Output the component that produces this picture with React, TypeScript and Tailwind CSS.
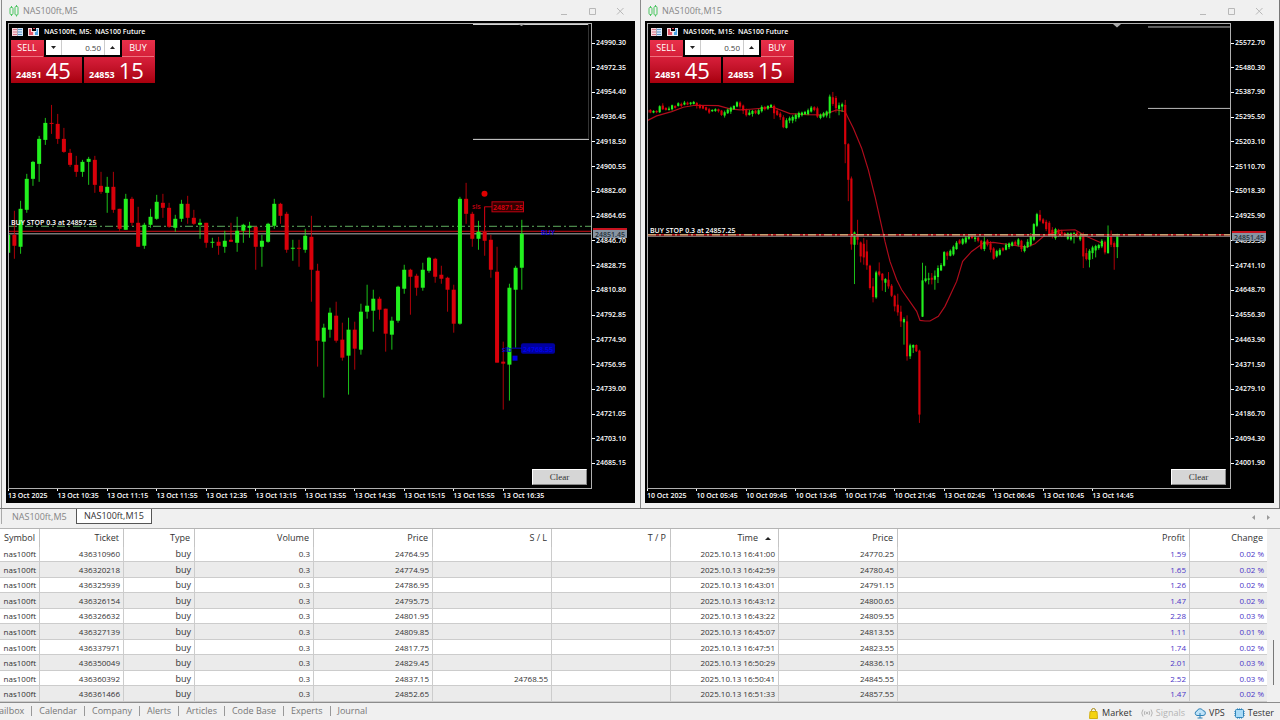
import type { ReactNode } from "react"
import { clsx } from "clsx"

// [high, body top, body bottom, low, rising]
type Candle = [number, number, number, number, 0 | 1]

interface ChartSpec {
  id: string
  title: string
  caption: string
  prices: string[]
  times: string[]
  originX: number
  orderY: number
  bidY: number
  drawing: ReactNode
  labels?: ReactNode
}

const PLOT_W = 582
const PLOT_H = 464
const UP = "#22f01e"
const DOWN = "#d8000a"

const M5: Candle[] = [
  [235, 235, 253, 255, 1], [211, 235, 246, 259, 0], [201, 209, 247, 254, 1], [174, 179, 210, 213, 1],
  [161, 162, 179, 186, 1], [136, 139, 164, 182, 1], [118, 123, 140, 145, 1], [105, 123, 124, 134, 0],
  [114, 124, 139, 144, 0], [128, 139, 152, 153, 0], [149, 153, 165, 167, 0], [156, 165, 172, 177, 0],
  [160, 162, 172, 177, 1], [157, 159, 162, 185, 1], [156, 160, 185, 193, 0], [172, 186, 192, 194, 0],
  [177, 187, 193, 213, 1], [172, 187, 210, 213, 0], [209, 209, 229, 231, 0], [194, 199, 230, 230, 1],
  [197, 199, 223, 226, 0], [207, 223, 247, 247, 0], [223, 225, 246, 249, 1], [209, 217, 225, 228, 1],
  [195, 202, 219, 220, 1], [194, 203, 208, 218, 0], [203, 208, 227, 228, 0], [215, 219, 228, 232, 1],
  [200, 204, 219, 222, 1], [196, 204, 218, 224, 0], [210, 218, 224, 225, 0], [219, 223, 225, 239, 1],
  [223, 223, 243, 248, 0], [238, 242, 243, 248, 1], [237, 242, 246, 255, 0], [231, 241, 247, 253, 1],
  [223, 240, 242, 242, 0], [217, 231, 243, 252, 1], [224, 225, 231, 243, 1], [222, 226, 228, 238, 1],
  [227, 227, 247, 270, 0], [235, 241, 247, 267, 1], [223, 224, 242, 243, 1], [199, 204, 226, 229, 1],
  [203, 204, 216, 224, 0], [212, 214, 250, 253, 0], [240, 248, 249, 261, 1], [240, 248, 249, 267, 0],
  [229, 236, 250, 253, 1], [216, 237, 270, 302, 0], [264, 271, 341, 367, 0], [324, 328, 342, 398, 1],
  [308, 313, 330, 338, 1], [302, 316, 341, 343, 0], [323, 340, 358, 361, 0], [318, 330, 356, 395, 1],
  [322, 330, 349, 370, 0], [304, 312, 350, 355, 1], [285, 306, 312, 319, 1], [290, 299, 311, 332, 1],
  [297, 299, 310, 320, 0], [309, 309, 334, 352, 0], [317, 321, 335, 350, 1], [286, 287, 321, 323, 1],
  [265, 270, 289, 294, 1], [269, 270, 277, 315, 0], [274, 276, 288, 296, 0], [263, 270, 288, 291, 1],
  [257, 258, 271, 273, 1], [258, 259, 277, 283, 0], [266, 275, 279, 284, 0], [277, 278, 290, 312, 0],
  [285, 290, 324, 333, 0], [197, 199, 324, 325, 1], [183, 199, 214, 224, 0], [212, 214, 239, 247, 0],
  [221, 232, 239, 250, 1], [207, 232, 241, 256, 0], [235, 240, 270, 278, 0], [247, 272, 363, 363, 0],
  [342, 362, 364, 410, 0], [284, 288, 365, 401, 1], [266, 268, 290, 348, 1], [220, 234, 268, 290, 1],
]

// finer series, stored in thirds of a plot unit
const M15: Candle[] = [
  [328, 330, 338, 340, 0], [328, 330, 338, 340, 0], [331, 333, 338, 340, 1], [331, 333, 337, 340, 0],
  [316, 319, 337, 339, 1], [310, 317, 328, 330, 0], [322, 324, 330, 332, 0], [320, 326, 330, 332, 1],
  [314, 316, 328, 332, 1], [316, 318, 324, 326, 0], [307, 310, 318, 320, 1], [308, 312, 318, 322, 0],
  [303, 308, 314, 316, 1], [305, 308, 314, 316, 0], [306, 308, 312, 316, 1], [303, 306, 312, 314, 1],
  [306, 309, 318, 326, 0], [312, 315, 324, 328, 0], [316, 318, 326, 328, 0], [320, 322, 330, 333, 0],
  [324, 328, 338, 342, 0], [328, 330, 334, 336, 1], [325, 328, 333, 336, 1], [326, 328, 334, 338, 0],
  [330, 332, 345, 348, 0], [332, 337, 347, 353, 1], [326, 329, 340, 342, 1], [320, 323, 335, 342, 1],
  [316, 318, 328, 330, 1], [304, 307, 320, 322, 1], [304, 308, 320, 326, 0], [314, 317, 332, 342, 0],
  [326, 330, 346, 350, 0], [330, 338, 345, 347, 1], [330, 333, 342, 350, 1], [330, 332, 340, 343, 0],
  [327, 331, 342, 345, 1], [316, 321, 334, 338, 1], [318, 321, 328, 332, 0], [316, 318, 326, 330, 1],
  [312, 315, 322, 324, 1], [314, 318, 340, 357, 0], [326, 332, 345, 348, 0], [336, 341, 352, 360, 0],
  [346, 352, 382, 385, 0], [355, 361, 384, 386, 1], [350, 355, 362, 370, 1], [346, 351, 362, 370, 1],
  [341, 345, 357, 365, 1], [335, 339, 352, 356, 1], [335, 338, 346, 350, 1], [333, 336, 343, 345, 1],
  [326, 331, 343, 346, 1], [318, 323, 335, 338, 1], [319, 322, 330, 334, 0], [320, 325, 350, 354, 0],
  [341, 345, 354, 358, 1], [336, 340, 350, 353, 1], [332, 335, 347, 353, 1], [284, 290, 340, 355, 1],
  [276, 292, 312, 318, 0], [288, 294, 325, 338, 0], [308, 316, 327, 346, 1], [308, 313, 320, 336, 1],
  [300, 315, 433, 490, 0], [430, 433, 540, 604, 0], [530, 536, 734, 750, 0], [695, 698, 735, 853, 1],
  [660, 705, 720, 735, 0], [725, 728, 770, 788, 0], [715, 732, 773, 795, 0], [720, 755, 797, 810, 0],
  [795, 798, 865, 870, 0], [835, 860, 892, 908, 0], [813, 818, 893, 897, 1], [788, 815, 825, 830, 0],
  [820, 822, 842, 873, 0], [835, 838, 849, 877, 1], [817, 840, 860, 867, 0], [853, 858, 888, 892, 0],
  [885, 888, 920, 935, 0], [882, 915, 938, 948, 0], [918, 936, 965, 982, 0], [953, 958, 968, 1035, 1],
  [947, 965, 1070, 1083, 0], [1032, 1037, 1070, 1078, 1], [1034, 1036, 1044, 1060, 1], [1034, 1036, 1055, 1057, 0],
  [1050, 1053, 1245, 1270, 0], [789, 842, 951, 952, 1], [798, 836, 844, 848, 1], [819, 836, 840, 854, 1],
  [820, 834, 840, 854, 0], [812, 828, 840, 870, 1], [797, 805, 832, 850, 1], [790, 796, 812, 814, 1],
  [754, 757, 798, 800, 1], [754, 758, 768, 780, 0], [749, 753, 768, 770, 1], [737, 741, 764, 768, 1],
  [724, 729, 748, 750, 1], [718, 722, 731, 734, 0], [714, 718, 732, 736, 1], [708, 713, 728, 732, 1],
  [706, 710, 717, 720, 1], [704, 708, 715, 718, 0], [708, 713, 718, 726, 1], [710, 713, 723, 728, 0],
  [720, 723, 747, 750, 0], [712, 725, 748, 754, 1], [718, 722, 735, 740, 0], [724, 731, 750, 758, 0],
  [742, 746, 777, 780, 0], [750, 754, 770, 774, 1], [745, 750, 765, 768, 1], [742, 745, 752, 755, 0],
  [730, 735, 750, 752, 1], [728, 731, 742, 748, 1], [725, 728, 738, 740, 1], [722, 726, 735, 738, 0],
  [715, 719, 735, 740, 1], [720, 723, 748, 756, 0], [735, 739, 754, 758, 1], [718, 726, 742, 745, 1],
  [700, 709, 735, 740, 1], [670, 673, 720, 724, 1], [639, 643, 678, 682, 1], [631, 645, 662, 666, 0],
  [655, 659, 670, 673, 0], [660, 666, 688, 694, 0], [664, 669, 706, 710, 0], [682, 690, 708, 716, 0],
  [684, 688, 715, 720, 1], [687, 690, 705, 712, 0], [690, 695, 708, 712, 0], [697, 700, 708, 712, 0],
  [698, 701, 717, 721, 1], [698, 701, 719, 723, 1], [696, 700, 710, 731, 1], [694, 698, 710, 714, 0],
  [700, 706, 719, 724, 1], [698, 703, 770, 805, 0], [745, 760, 778, 782, 0], [748, 753, 780, 803, 1],
  [738, 743, 760, 778, 1], [735, 739, 752, 773, 1], [732, 736, 745, 750, 1], [718, 723, 740, 745, 1],
  [722, 726, 758, 764, 0], [677, 706, 760, 762, 1], [692, 710, 735, 742, 0], [725, 730, 742, 810, 0],
  [702, 710, 742, 775, 1],
]

const AVERAGE =
  "1942,362 1970,348 2015,335 2050,322 2085,316 2155,317 2190,327 2220,330 2250,328 2320,322 2370,341 2420,344 2470,345 2510,330 2535,335 2560,385 2585,445 2605,510 2625,590 2655,725 2670,785 2690,840 2705,870 2750,935 2760,962 2775,964 2790,964 2815,950 2835,920 2870,845 2888,785 2915,755 2950,730 2980,728 3030,735 3080,742 3105,732 3130,710 3180,692 3225,690 3260,710 3310,732"

const ROWS = [
  ["436310960", "24764.95", "", "16:41:00", "24770.25", "1.59", "0.02 %"],
  ["436320218", "24774.95", "", "16:42:59", "24780.45", "1.65", "0.02 %"],
  ["436325939", "24786.95", "", "16:43:01", "24791.15", "1.26", "0.02 %"],
  ["436326154", "24795.75", "", "16:43:12", "24800.65", "1.47", "0.02 %"],
  ["436326632", "24801.95", "", "16:43:22", "24809.55", "2.28", "0.03 %"],
  ["436327139", "24809.85", "", "16:45:07", "24813.55", "1.11", "0.01 %"],
  ["436337971", "24817.75", "", "16:47:51", "24823.55", "1.74", "0.02 %"],
  ["436350049", "24829.45", "", "16:50:29", "24836.15", "2.01", "0.03 %"],
  ["436360392", "24837.15", "24768.55", "16:50:41", "24845.55", "2.52", "0.03 %"],
  ["436361466", "24852.65", "", "16:51:33", "24857.55", "1.47", "0.02 %"],
]

const COLUMNS = [
  { name: "Symbol", width: "w-[40px]" },
  { name: "Ticket", width: "w-[84px]" },
  { name: "Type", width: "w-[71px]" },
  { name: "Volume", width: "w-[119px]" },
  { name: "Price", width: "w-[119px]" },
  { name: "S / L", width: "w-[119px]" },
  { name: "T / P", width: "w-[119px]" },
  { name: "Time", width: "w-[108px]" },
  { name: "Price", width: "w-[119px]" },
  { name: "Profit", width: "" },
  { name: "Change", width: "w-[77px]" },
]

const PANELS = ["Mailbox", "Calendar", "Company", "Alerts", "Articles", "Code Base", "Experts", "Journal"]

function Candles({ data, x0, step, body, wick }: { data: Candle[]; x0: number; step: number; body: number; wick: number }) {
  return (
    <>
      {data.map(([high, top, bottom, low, rising], i) => {
        const x = x0 + i * step
        const color = rising ? UP : DOWN
        return (
          <g key={i} fill={color}>
            <rect x={x - wick / 2} y={high} width={wick} height={low - high} opacity={0.8} />
            <rect x={x - body / 2} y={top} width={body} height={Math.max(bottom - top, 1)} />
          </g>
        )
      })}
    </>
  )
}

// Text pinned to a plot coordinate; follows the plot when it is resized
function Pin({ x, y, className, children }: { x: number; y: number; className?: string; children?: ReactNode }) {
  return (
    <span
      className={clsx("absolute -translate-y-1/2 whitespace-nowrap text-[7px] leading-[9px]", className)}
      style={{ left: `${(x / PLOT_W) * 100}%`, top: `${(y / PLOT_H) * 100}%` }}
    >
      {children}
    </span>
  )
}

function CandleIcon() {
  return (
    <svg width="10" height="12" viewBox="0 0 10 12" fill="none" stroke="#4cc662" aria-hidden="true">
      <path d="M2.500 1v1.500M2.500 9.500v1.500M7.500 0v1.500M7.500 10v1.500" />
      <rect x="1" y="2.500" width="3" height="7" rx="1" />
      <rect x="6" y="1.500" width="3" height="8.500" rx="1" />
    </svg>
  )
}

function DepthIcon() {
  return (
    <svg width="11" height="8" viewBox="0 0 11 8" aria-hidden="true">
      <path d="M0 0h5.500v8H0z" fill="#f6d9de" />
      <path d="M5.500 0H11v8H5.500z" fill="#d5e8f8" />
      <path d="M1 1.500h4M1 4h4M1 6.500h4" stroke="#d9788a" />
      <path d="M6 1.500h4M6 4h4M6 6.500h4" stroke="#5a94cc" />
    </svg>
  )
}

function TradeIcon() {
  return (
    <svg width="11" height="8" viewBox="0 0 11 8" aria-hidden="true">
      <path d="M0 0h4v3h2v5H0z" fill="#f6dde2" />
      <path d="M1 1h2v3h2v3H1z" fill="#e2566a" />
      <path d="M6 3h2V0h3v8H6z" fill="#e6f0fa" />
      <path d="M8.500 1H10v6H7V4h1.500z" fill="#4ba3e4" />
      <path d="M5 0h2v1H5z" fill="#e0415a" />
    </svg>
  )
}

function QuoteButton({ side, small, big }: { side: "SELL" | "BUY"; small: string; big: string }) {
  return (
    <button
      type="button"
      className="flex w-[71px] flex-col bg-linear-to-b from-[#e8304a] via-[#d01a34] to-[#a8000c] text-white"
    >
      <span
        className={clsx(
          "w-8 border-b border-[#f0707e] text-center text-[9px] leading-4",
          side === "BUY" && "mr-px self-end",
        )}
      >
        {side}
      </span>
      <span className="flex h-[26px] items-end gap-1 pl-[5px]">
        <span className="pb-[3px] text-[9px] font-bold leading-[10px]">{small}</span>
        <span className="text-[22px] leading-[26px]">{big}</span>
      </span>
    </button>
  )
}

function TradePanel({ id }: { id: string }) {
  return (
    <div className="absolute left-[2px] top-4 flex h-[43px] gap-[2px] font-normal">
      <QuoteButton side="SELL" small="24851" big="45" />
      <QuoteButton side="BUY" small="24853" big="15" />
      <div className="absolute left-[33px] top-0 flex h-[17px] w-[78px] bg-black px-[2px] pb-[2px]">
        <button type="button" aria-label="Decrease volume" className="grid w-[15px] place-items-center bg-white">
          <svg width="5" height="3" viewBox="0 0 5 3"><path d="M0 0h5L2.500 3z" fill="#222" /></svg>
        </button>
        <input
          id={`volume-${id}`}
          aria-label="Volume"
          defaultValue="0.50"
          className="min-w-0 flex-1 border-x border-[#ccc] bg-white pr-[3px] text-right text-[8px] text-[#444] outline-none"
        />
        <button type="button" aria-label="Increase volume" className="grid w-[15px] place-items-center bg-white">
          <svg width="5" height="3" viewBox="0 0 5 3"><path d="M0 3h5L2.500 0z" fill="#222" /></svg>
        </button>
      </div>
    </div>
  )
}

function ChartWindow({ spec }: { spec: ChartSpec }) {
  return (
    <section className="flex min-w-0 flex-1 flex-col border-l border-[#8a8a8a] pb-[5px] pl-1 pr-[5px]">
      <header className="flex h-[21px] shrink-0 items-center pl-[3px] pr-[11px] text-[#868686]">
        <CandleIcon />
        <h2 className="ml-1 text-[9px] leading-3">{spec.title}</h2>
        <div className="ml-auto flex gap-5 text-[#b8b8b8]">
          {[
            ["Minimize", "M1 7.500h6"],
            ["Maximize", "M1.500 1.500h6v6h-6z"],
            ["Close", "M1 1l6.500 6.500M7.500 1L1 7.500"],
          ].map(([name, d]) => (
            <button key={name} type="button" aria-label={name} className="pt-px">
              <svg width="8" height="9" viewBox="0 0 8 9" fill="none" stroke="currentColor"><path d={d} /></svg>
            </button>
          ))}
        </div>
      </header>

      <div className="grid min-h-0 flex-1 grid-cols-[minmax(0,1fr)_43px] grid-rows-[minmax(0,1fr)_14px] bg-black pl-[2px] pt-[2px] font-semibold text-white">
        <div className="relative z-10 border border-[#b0b0b0]">
          <svg
            className="absolute inset-0 h-full w-full"
            viewBox={`${spec.originX} 24 ${PLOT_W} ${PLOT_H}`}
            preserveAspectRatio="none"
            aria-hidden="true"
          >
            {spec.drawing}
          </svg>
          <div className="absolute left-[3px] top-[3px] flex items-center gap-[5px] whitespace-pre text-[7px] leading-[9px]">
            <DepthIcon />
            <TradeIcon />
            {spec.caption}
          </div>
          <TradePanel id={spec.id} />
          <Pin x={2} y={spec.orderY}>BUY STOP 0.3 at 24857.25</Pin>
          {spec.labels}
          <button
            type="button"
            className="absolute bottom-[3px] right-1 h-4 w-[55px] border border-b-[#888] border-l-white border-r-[#888] border-t-white bg-[#d6d6d6] font-['Liberation_Serif',serif] text-[9px] font-normal leading-3 text-[#333]"
          >
            Clear
          </button>
        </div>

        <div className="row-span-2 flex flex-col justify-between pb-[35px] pt-4 text-[7px] leading-2">
          {spec.prices.map((price) => (
            <div key={price} className="flex h-2 items-center gap-px">
              <span className="h-px w-[3px] bg-white" />
              {price}
            </div>
          ))}
        </div>

        <div className="flex">
          {spec.times.map((time) => (
            <div key={time} className="min-w-0 flex-5 whitespace-nowrap text-[7px] leading-[10px]">
              <div className="h-[2px] w-px bg-white" />
              {time}
            </div>
          ))}
          <div style={{ flexGrow: 59 - spec.times.length * 5 }} />
        </div>
      </div>
    </section>
  )
}

function PriceTag({ y }: { y: number }) {
  return (
    <Pin x={584} y={y} className="h-[10px] w-[34px] border-t-2 border-[#c81420] bg-[#8794a2] pl-[2px] text-[#25303a]">
      24851.45
    </Pin>
  )
}

const CHARTS: ChartSpec[] = [
  {
    id: "m5",
    title: "NAS100ft,M5",
    caption: "NAS100ft, M5:  NAS100 Future",
    originX: 9,
    orderY: 198,
    bidY: 209,
    prices: [
      "24990.30", "24972.35", "24954.40", "24936.45", "24918.50", "24900.55", "24882.60", "24864.65", "24846.70",
      "24828.75", "24810.80", "24792.85", "24774.90", "24756.95", "24739.00", "24721.05", "24703.10", "24685.15",
    ],
    times: [
      "13 Oct 2025", "13 Oct 10:35", "13 Oct 11:15", "13 Oct 11:55", "13 Oct 12:35", "13 Oct 13:15",
      "13 Oct 13:55", "13 Oct 14:35", "13 Oct 15:15", "13 Oct 15:55", "13 Oct 16:35",
    ],
    drawing: (
      <>
        <path d="M473 24.500H589M473 139.500H589" stroke="#d8d8d8" />
        <path d="M588.500 24V139" stroke="#333" />
        <path d="M518 24h7l-3.500 2z" fill="#aaa" />
        <path d="M9 226.500H591" stroke="#5fae5f" strokeDasharray="8 3 2 3" />
        <path d="M9 231.500H591" stroke="#d01018" />
        <path d="M9 234H591" stroke="#777" strokeWidth="1.500" />
        <Candles data={M5} x0={8.200} step={6.188} body={4} wick={1} />
        <circle cx="484.500" cy="194" r="3" fill="#e00000" />
        <path d="M484.500 232V207H492" stroke="#c00010" fill="none" />
        <rect x="492" y="202" width="31.500" height="10" fill="#300" stroke="#c00010" />
        <rect x="521" y="343.500" width="34" height="10.500" rx="2" fill="#0000a0" />
        <path d="M512 348.500h10" stroke="#0000d0" />
        <rect x="512.500" y="356" width="5" height="5" fill="#0000e0" />
      </>
    ),
    labels: (
      <>
        <Pin x={463} y={182} className="text-[#c00010]">sls</Pin>
        <Pin x={484} y={183} className="text-[#e00010]">24871.25</Pin>
        <Pin x={532} y={208} className="text-[#0000e0]">BUY</Pin>
        <Pin x={493} y={325} className="text-[#0000e0]">slb</Pin>
        <Pin x={514} y={325} className="text-[#0000f0]">24768.55</Pin>
      </>
    ),
  },
  {
    id: "m15",
    title: "NAS100ft,M15",
    caption: "NAS100ft, M15:  NAS100 Future",
    originX: 648,
    orderY: 206,
    bidY: 212,
    prices: [
      "25572.70", "25480.30", "25387.90", "25295.50", "25203.10", "25110.70", "25018.30", "24925.90", "24833.50",
      "24741.10", "24648.70", "24556.30", "24463.90", "24371.50", "24279.10", "24186.70", "24094.30", "24001.90",
    ],
    times: [
      "10 Oct 2025", "10 Oct 05:45", "10 Oct 09:45", "10 Oct 13:45", "10 Oct 17:45", "10 Oct 21:45",
      "13 Oct 02:45", "13 Oct 06:45", "13 Oct 10:45", "13 Oct 14:45",
    ],
    drawing: (
      <>
        <path d="M1148 27H1230M1148 108.500H1230" stroke="#bbb" />
        <path d="M1113 24h8l-4 3.500z" fill="#aaa" />
        <g transform="scale(0.33333)">
          <polyline points={AVERAGE} fill="none" stroke="#b00c1c" strokeWidth="3.500" />
          <Candles data={M15} x0={1942} step={9.276} body={6.500} wick={3} />
        </g>
        <path d="M648 236.500H1230" stroke="#a08a8a" />
        <path d="M648 235H1230" stroke="#c01820" strokeWidth="1.500" />
        <path d="M648 235H1230" stroke="#c8a070" strokeWidth="1.500" strokeDasharray="8 3 2 3" />
      </>
    ),
  },
]

function Tabs() {
  return (
    <nav className="flex h-[19px] shrink-0 items-start pl-px pr-[10px] text-[9px] leading-[14px]">
      <a href="#m5" className="w-[75px] border-l border-[#aaa] pl-[10px] pt-px text-[#858585]">NAS100ft,M5</a>
      <a href="#m15" className="h-[15px] border border-t-0 border-[#555] bg-white px-[7px] text-[#333]">NAS100ft,M15</a>
      <div className="ml-auto flex gap-3 pt-[6px] text-[#999]">
        <button type="button" aria-label="Scroll left">
          <svg width="3" height="5" viewBox="0 0 3 5"><path d="M3 0v5L0 2.500z" fill="currentColor" /></svg>
        </button>
        <button type="button" aria-label="Scroll right">
          <svg width="3" height="5" viewBox="0 0 3 5"><path d="M0 0v5l3-2.500z" fill="currentColor" /></svg>
        </button>
      </div>
    </nav>
  )
}

function History() {
  return (
    <div className="flex min-h-0 flex-174 border-t border-[#b4b4b4]">
      <table className="h-full flex-1 table-fixed border-separate border-spacing-0 bg-white text-right text-[8px] leading-[11px] text-[#333]">
        <thead>
          <tr className="h-[18px] text-[9px]">
            {COLUMNS.map((col, i) => (
              <th
                key={i}
                className={clsx("whitespace-nowrap border-r border-[#c4c4c4] p-0 pr-1 font-normal last:border-r-0", col.width)}
              >
                {col.name}
                {col.name === "Time" && (
                  <svg className="ml-[7px] mr-[3px] inline align-middle" width="6" height="3" viewBox="0 0 6 3" aria-hidden="true">
                    <path d="M0 3h6L3 0z" fill="#222" />
                  </svg>
                )}
              </th>
            ))}
          </tr>
        </thead>
        <tbody>
          {ROWS.map(([ticket, open, stop, time, close, profit, change]) => (
            <tr
              key={ticket}
              className="even:bg-[#ebebeb] [&>td]:border-b [&>td]:border-r [&>td]:border-[#cccccc] [&>td]:p-0 [&>td]:pr-[3px] [&>td:last-child]:border-r-0"
            >
              <td>nas100ft</td>
              <td>{ticket}</td>
              <td className="text-[9px]">buy</td>
              <td>0.3</td>
              <td>{open}</td>
              <td>{stop}</td>
              <td />
              <td>2025.10.13 {time}</td>
              <td>{close}</td>
              <td className="text-[#4a35c8]">{profit}</td>
              <td className="text-[#4a35c8]">{change}</td>
            </tr>
          ))}
        </tbody>
      </table>
      <div className="flex w-[13px] flex-col items-center justify-end pb-[17px]">
        <div className="h-[45px] w-px bg-[#777]" />
      </div>
    </div>
  )
}

function StatusBar() {
  return (
    <footer className="flex h-[18px] shrink-0 justify-between overflow-hidden border-t border-[#8c8c8c] pr-[6px] text-[9px] text-[#777]">
      <nav className="-ml-4 flex items-center pb-px">
        {PANELS.map((name) => (
          <a key={name} href={`#${name}`} className="border-r border-[#999] px-[7px] leading-[10px] last:border-r-0">
            {name}
          </a>
        ))}
      </nav>
      <div className="flex items-center gap-[9px] pt-[3px] leading-3 text-[#333]">
        <button type="button" className="flex items-center gap-1">
          <svg width="9" height="11" viewBox="0 0 9 11" aria-hidden="true">
            <path d="M2.500 4V2.500a2 2 0 014 0V4" fill="none" stroke="#a98a10" />
            <path d="M1 3.500h7l.5 7H.5z" fill="#f4d313" stroke="#d2b012" />
          </svg>
          Market
        </button>
        <button type="button" className="flex items-center gap-[3px] text-[#b4b4b4]">
          <svg width="12" height="8" viewBox="0 0 12 8" fill="none" stroke="currentColor" aria-hidden="true">
            <path d="M2 .5Q-.5 4 2 7.500M4 2Q2.500 4 4 6M8 2q1.500 2 0 4M10 .5q2.500 3.500 0 7" />
            <circle cx="6" cy="4" r="0.800" fill="currentColor" />
          </svg>
          Signals
        </button>
        <button type="button" className="flex items-center gap-[3px]">
          <svg width="12" height="11" viewBox="0 0 12 11" fill="#bfe3f8" stroke="#2f83b8" aria-hidden="true">
            <path d="M3 7.500A2.300 2.300 0 013 3a3.200 3.200 0 016-.3 2.400 2.400 0 010 4.800z" />
            <path d="M6 5v5M3.500 10h5" fill="none" />
          </svg>
          VPS
        </button>
        <button type="button" className="flex items-center gap-[3px]">
          <svg width="11" height="11" viewBox="0 0 11 11" aria-hidden="true">
            <path d="M3.500 0v11M5.500 0v11M7.500 0v11M0 3.500h11M0 5.500h11M0 7.500h11" stroke="#7fb4d6" />
            <rect x="1.500" y="1.500" width="8" height="8" rx="1" fill="#a9dbf7" stroke="#2f83b8" />
          </svg>
          Tester
        </button>
      </div>
    </footer>
  )
}

export default function App() {
  return (
    <main className="flex h-screen flex-col overflow-hidden bg-[#f0f0f0] font-['Open_Sans',sans-serif]">
      <div className="flex min-h-0 flex-509 border-b border-r border-[#777] pl-px">
        {CHARTS.map((spec) => (
          <ChartWindow
            key={spec.id}
            spec={{ ...spec, labels: <>{spec.labels}<PriceTag y={spec.bidY} /></> }}
          />
        ))}
      </div>
      <Tabs />
      <History />
      <StatusBar />
    </main>
  )
}
